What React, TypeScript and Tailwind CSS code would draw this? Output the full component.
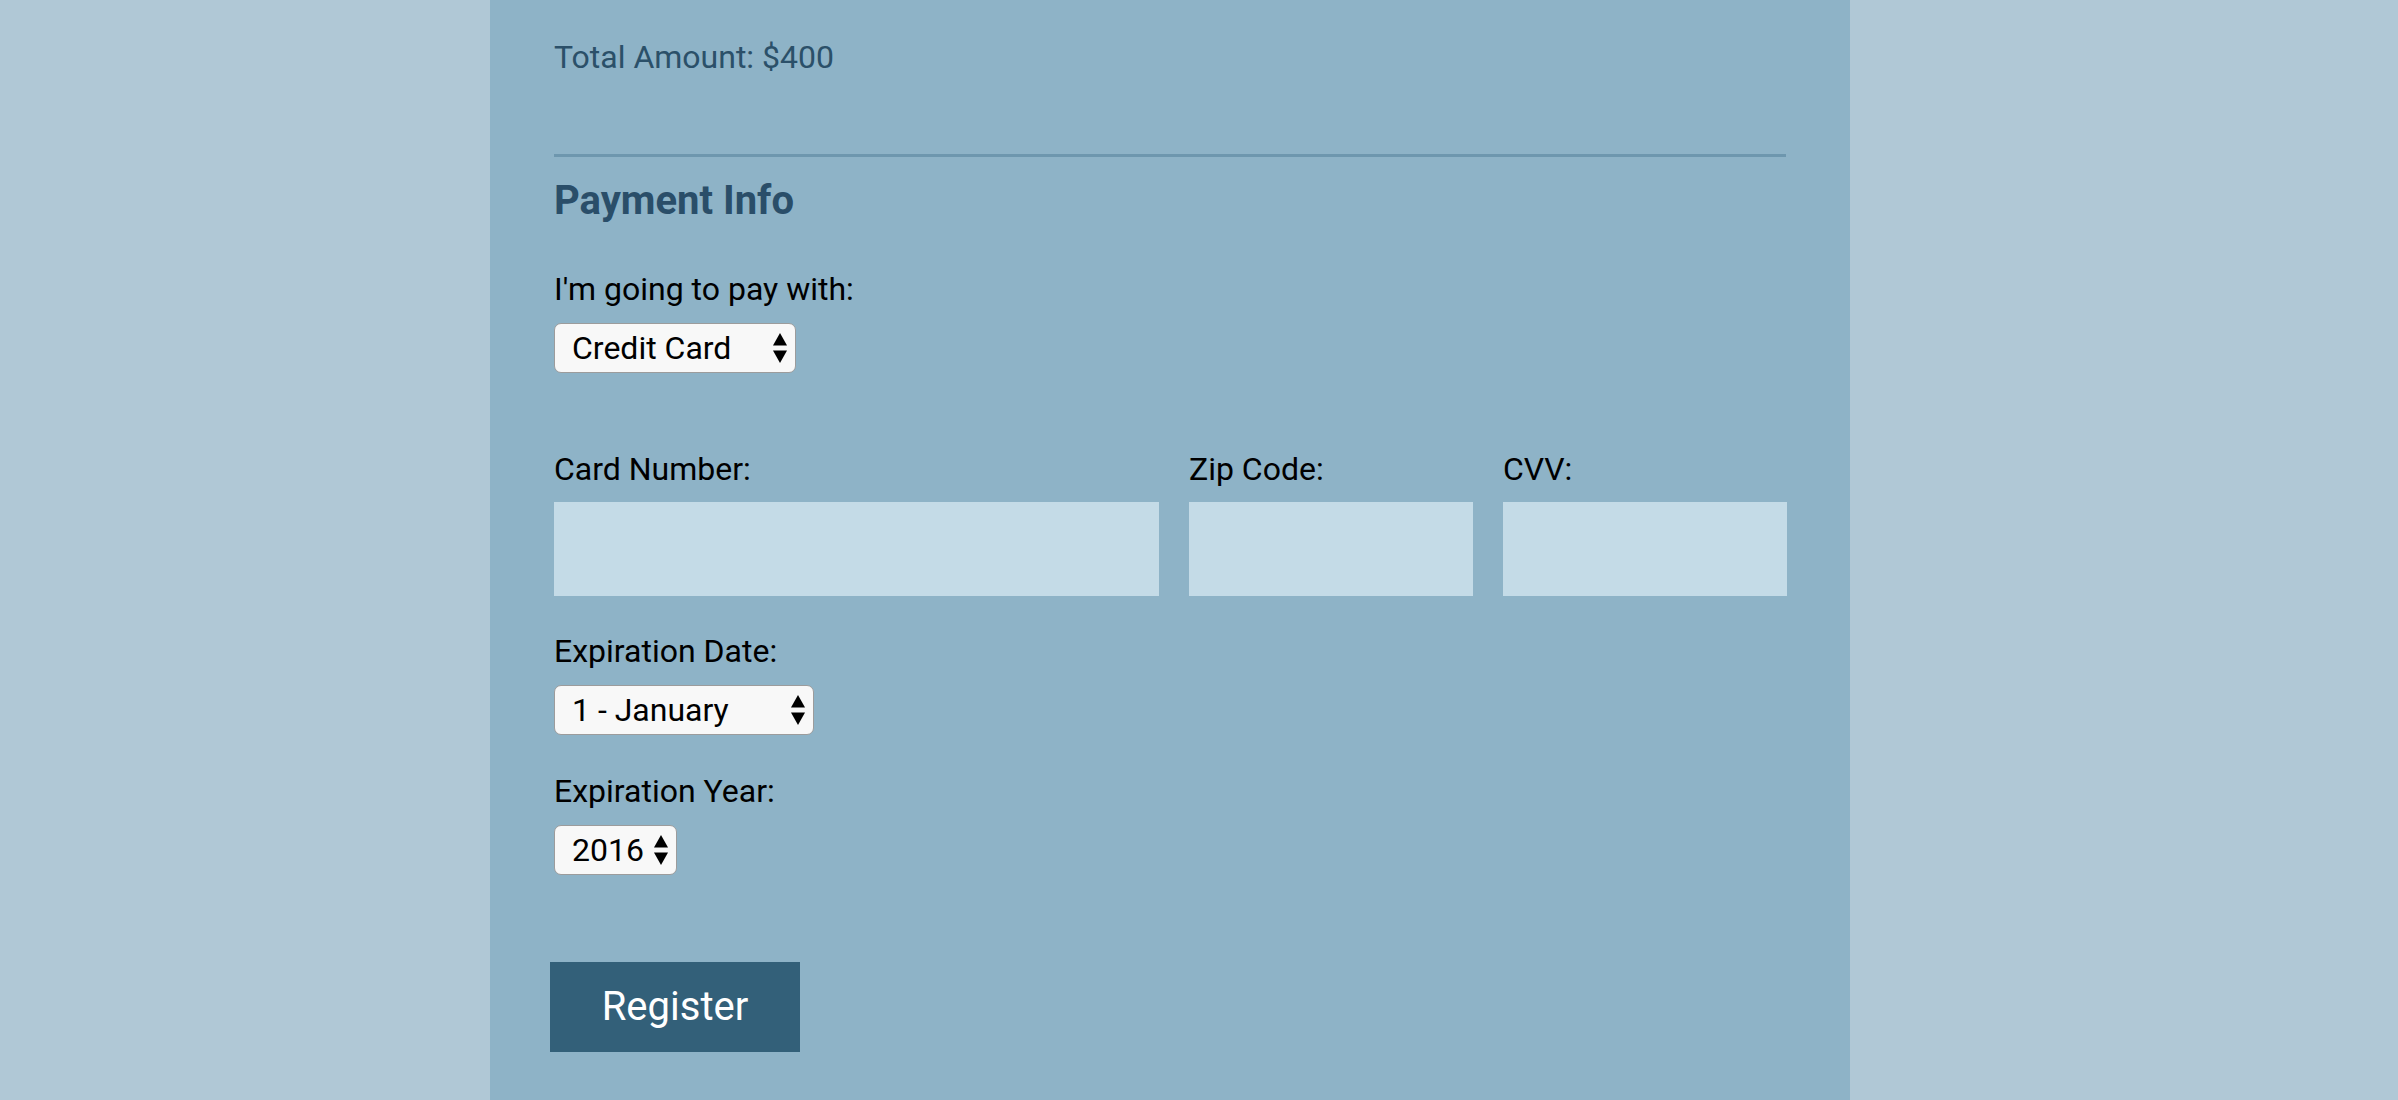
import { useState } from 'react';

// Payment step of the registration form — pay method, card fields, expiry and submit.

function Arrows() {
  return (
    <svg width="14" height="30" viewBox="0 0 14 30" className="pointer-events-none absolute right-[9px] top-1/2 -translate-y-1/2">
      <path d="M7 0 L14 12.5 L0 12.5 Z" fill="#000" />
      <path d="M0 17.5 L14 17.5 L7 30 Z" fill="#000" />
    </svg>
  );
}

function Select({ width, value, options, onChange }: { width: string; value: string; options: string[]; onChange: (v: string) => void }) {
  return (
    <div className={`relative ${width}`}>
      <select
        value={value}
        onChange={(e) => onChange(e.target.value)}
        className="block w-full h-[50px] appearance-none rounded-[7px] border border-[#9c9c9c] bg-[#f8f8f8] pl-[17px] pr-[30px] text-[32px] leading-[48px] text-black outline-none"
        style={{ fontFamily: 'Roboto, sans-serif' }}
      >
        {options.map((o) => (
          <option key={o}>{o}</option>
        ))}
      </select>
      <Arrows />
    </div>
  );
}

const MONTHS = ['1 - January', '2 - February', '3 - March', '4 - April', '5 - May', '6 - June', '7 - July', '8 - August', '9 - September', '10 - October', '11 - November', '12 - December'];
const YEARS = ['2016', '2017', '2018', '2019', '2020'];

export default function App() {
  const [method, setMethod] = useState('Credit Card');
  const [month, setMonth] = useState(MONTHS[0]);
  const [year, setYear] = useState(YEARS[0]);

  return (
    <div className="min-h-screen bg-[#b0c8d6] font-['Roboto',sans-serif]">
      <div className="ml-[490px] w-[1360px] min-h-[1100px] bg-[#8eb3c7] px-[64px] pt-[37px] pb-[60px]">
        <p className="text-[32px] leading-[40px] text-[#2b5069]">Total Amount: $400</p>

        <div className="mt-[77px] h-[3px] bg-[#6e97ae]" />

        <h2 className="mt-[19px] text-[40px] leading-[50px] font-bold text-[#2a4e69]">Payment Info</h2>

        <label className="mt-[43px] block text-[32px] leading-[40px] text-black">I'm going to pay with:</label>
        <div className="mt-[14px]">
          <Select width="w-[242px]" value={method} options={['Credit Card', 'PayPal', 'Bitcoin']} onChange={setMethod} />
        </div>

        <div className="mt-[76px] grid grid-cols-[605px_284px_284px] gap-x-[30px]">
          <div>
            <label className="block text-[32px] leading-[40px] text-black">Card Number:</label>
            <input className="mt-[13px] block h-[94px] w-full bg-[#c4dbe7] outline-none" />
          </div>
          <div>
            <label className="block text-[32px] leading-[40px] text-black">Zip Code:</label>
            <input className="mt-[13px] block h-[94px] w-full bg-[#c4dbe7] outline-none" />
          </div>
          <div>
            <label className="block text-[32px] leading-[40px] text-black">CVV:</label>
            <input className="mt-[13px] block h-[94px] w-full bg-[#c4dbe7] outline-none" />
          </div>
        </div>

        <label className="mt-[35px] block text-[32px] leading-[40px] text-black">Expiration Date:</label>
        <div className="mt-[14px]">
          <Select width="w-[260px]" value={month} options={MONTHS} onChange={setMonth} />
        </div>

        <label className="mt-[36px] block text-[32px] leading-[40px] text-black">Expiration Year:</label>
        <div className="mt-[14px]">
          <Select width="w-[123px]" value={year} options={YEARS} onChange={setYear} />
        </div>

        <button className="mt-[87px] -ml-[4px] block h-[90px] w-[250px] bg-[#336079] text-[40px] text-white">
          Register
        </button>
      </div>
    </div>
  );
}
